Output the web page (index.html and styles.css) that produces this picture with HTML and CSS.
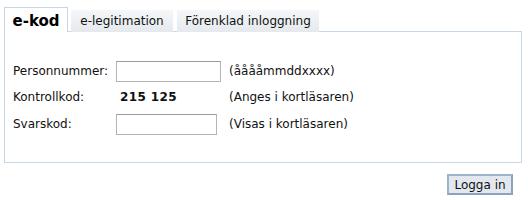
FILE: index.html
```html
<!DOCTYPE html>
<html lang="sv">
<head>
  <meta charset="UTF-8" />
  <title>Logga in</title>
  <link rel="stylesheet" href="styles.css">
</head>
<body>
  <div id="login">
    <!-- flikar -->
    <div class="tabs">
      <div class="tab active">e-kod</div>
      <div class="tab">e-legitimation</div>
      <div class="tab">Förenklad inloggning</div>
    </div>

    <!-- e-kod -->
    <div class="panel">
      <table class="form">
        <tr>
          <td class="label">Personnummer:</td>
          <td class="field"><input type="text" class="pnr"></td>
          <td class="hint">(ååååmmddxxxx)</td>
        </tr>
        <tr>
          <td class="label">Kontrollkod:</td>
          <td class="field code">215 125</td>
          <td class="hint">(Anges i kortläsaren)</td>
        </tr>
        <tr>
          <td class="label">Svarskod:</td>
          <td class="field"><input type="text" class="svar"></td>
          <td class="hint">(Visas i kortläsaren)</td>
        </tr>
      </table>
    </div>

    <div class="actions">
      <button id="loginBtn">Logga in</button>
    </div>
  </div>
</body>
</html>
```

FILE: styles.css
```css
body, html { margin:0; padding:0; background:#fff; font-family:'DejaVu Sans','Verdana',sans-serif; font-size:12px; color:#111; }
#login { padding:8px 7px 0 4px; width:518px; }
/* flikar */
.tabs { display:flex; align-items:flex-end; height:24px; position:relative; z-index:1; }
.tab { box-sizing:border-box; height:22px; line-height:23px; text-align:center; white-space:nowrap; background:linear-gradient(#f5f7f9,#e5e9ed); color:#111; font-size:12px; }
.tab.active { width:64px; height:25px; line-height:26px; background:#fff; border:1px solid #c8d7e5; border-bottom:none; font-size:15px; font-weight:bold; color:#000; }
.tab:nth-child(2) { width:102px; margin-left:3px; }
.tab:nth-child(3) { width:142px; margin-left:4px; }
.panel { box-sizing:border-box; height:132px; margin-top:-1px; border:1px solid #c8d7e5; padding-top:27px; }
/* formulär */
.form { border-collapse:collapse; margin-left:8px; table-layout:fixed; }
.form td { padding:0; vertical-align:middle; box-sizing:border-box; }
.form .label { width:103px; height:26px; }
.form .field { width:113px; }
.form .code { font-weight:bold; font-size:12px; padding-left:4px; letter-spacing:0.4px; }
.form tr:first-child td { height:24px; }
.form tr:nth-child(2) td { height:28px; }
input { display:block; height:21px; box-sizing:border-box; border:1px solid #b4b4b4; border-top-color:#9c9c9c; padding:0 2px; font-family:inherit; font-size:12px; }
input.pnr { width:105px; }
input.svar { width:101px; }
.actions { display:flex; justify-content:flex-end; padding:11px 9px 0 0; }
#loginBtn { width:66px; height:21px; padding:0; font-family:inherit; font-size:12px; color:#111; background:#e3e8ee; border:2px solid #8aa2c0; border-top-color:#9fb3cc; border-left-color:#9fb3cc; cursor:pointer; }
```
